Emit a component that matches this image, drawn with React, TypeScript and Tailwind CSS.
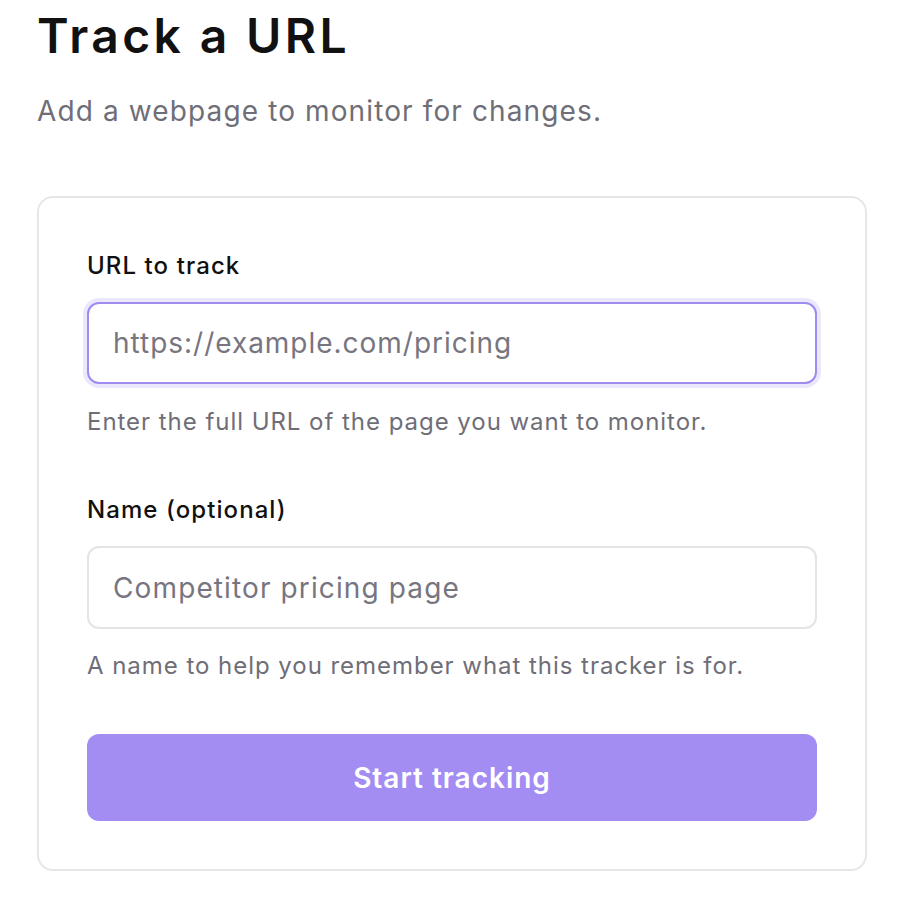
export default function App() {
  return (
    <div className="min-h-screen bg-white pl-[37px] pr-[39px] font-['Inter',sans-serif]">
      <h1 className="pt-[8px] text-[48px] font-semibold leading-[56px] tracking-[0.07em] text-[#111111]">
        Track a URL
      </h1>
      <p className="mt-[30px] text-[28px] leading-[34px] tracking-[0.04em] text-[#6f6e77]">
        Add a webpage to monitor for changes.
      </p>

      <div className="mt-[68px] rounded-[16px] border-2 border-[#e6e6e6] px-[48px] pt-[52px] pb-[48px]">
        <label className="block text-[24px] font-medium leading-[32px] tracking-[0.045em] text-[#111111]">
          URL to track
        </label>
        <div className="-mx-[4px] mt-[16px] rounded-[16px] bg-[#ebe7fc] p-[4px]">
          <input
            type="text"
            placeholder="https://example.com/pricing"
            className="block h-[82px] w-full rounded-[12px] border-2 border-[#a08cf0] bg-white px-[24px] text-[28px] tracking-[0.035em] text-[#111111] outline-none placeholder:text-[#77757f]"
          />
        </div>
        <p className="mt-[18px] text-[24px] leading-[32px] tracking-[0.04em] text-[#6f6e77]">
          Enter the full URL of the page you want to monitor.
        </p>

        <label className="mt-[56px] block text-[24px] font-medium leading-[32px] tracking-[0.045em] text-[#111111]">
          Name (optional)
        </label>
        <input
          type="text"
          placeholder="Competitor pricing page"
          className="mt-[20px] block h-[83px] w-full rounded-[12px] border-2 border-[#e4e4e7] bg-white px-[24px] text-[28px] tracking-[0.04em] text-[#111111] outline-none placeholder:text-[#77757f]"
        />
        <p className="mt-[21px] text-[24px] leading-[32px] tracking-[0.04em] text-[#6f6e77]">
          A name to help you remember what this tracker is for.
        </p>

        <button
          type="button"
          className="mt-[52px] flex h-[87px] w-full items-center justify-center rounded-[12px] bg-[#a38df3] text-[28px] font-semibold tracking-[0.035em] text-white"
        >
          Start tracking
        </button>
      </div>
    </div>
  );
}
